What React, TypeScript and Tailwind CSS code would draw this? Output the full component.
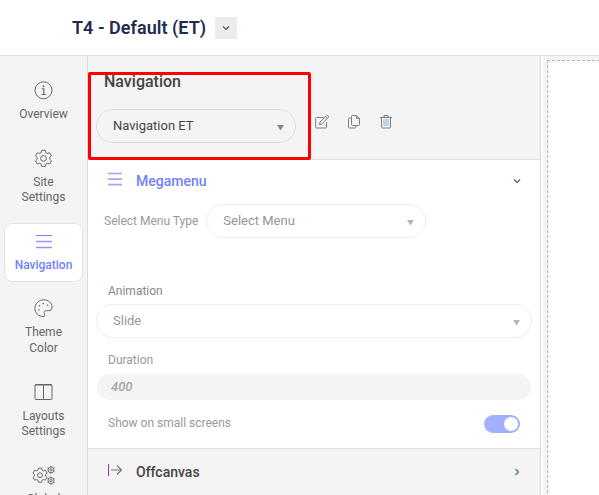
import type { ReactNode } from "react";

function Svg({ size = 20, width, children, className = "" }: { size?: number; width?: number; children: ReactNode; className?: string }) {
  const w = width ?? size;
  return (
    <svg width={w} height={size} viewBox={`0 0 ${w} ${size}`} fill="none" stroke="currentColor" strokeWidth="1" className={`shrink-0 ${className}`}>
      {children}
    </svg>
  );
}

const GEAR =
  "M8.2 1.5h3.6l.5 2.3 1.6.9 2.2-.8 1.9 3.1-1.7 1.6v1.9l1.7 1.6-1.9 3.1-2.2-.8-1.6.9-.5 2.3H8.2l-.5-2.3-1.6-.9-2.2.8L2 12.100l1.700-1.600V8.600L2 7l1.900-3.100 2.200.8 1.600-.9z";

const InfoIcon = () => (
  <Svg>
    <circle cx="9.500" cy="10.300" r="8.500" />
    <circle cx="9.500" cy="6.200" r="1" fill="currentColor" stroke="none" />
    <path d="M7.800 8.800h2v5.500M7.500 14.500h4.300" strokeWidth="1.100" />
  </Svg>
);

const GearIcon = () => (
  <Svg>
    <g transform="translate(-0.5 0.8)">
      <path d={GEAR} strokeLinejoin="round" />
      <circle cx="10" cy="9.600" r="2.900" />
    </g>
  </Svg>
);

const BarsIcon = () => (
  <Svg>
    <path d="M2 4.500h16" strokeWidth="1" />
    <path d="M2 10.500h16M2 16.500h16" stroke="#9a92fa" strokeWidth="1.400" />
  </Svg>
);

const PaletteIcon = () => (
  <Svg>
    <g transform="translate(-0.5 0.3)">
      <path d="M10 18.200C5 18.200 1.400 14.500 1.400 10S5.200 1.500 10.300 1.500c4.700 0 8.300 3.200 8.300 7.200 0 2.400-1.300 3.700-3.500 3.700h-2.200c-1.800 0-2.600 1.200-2.100 2.700.6 1.800.7 3.100-.8 3.100z" />
      <g fill="currentColor" stroke="none">
        <circle cx="5.500" cy="11.700" r=".8" />
        <circle cx="6" cy="7.400" r=".8" />
        <circle cx="9.600" cy="5.300" r=".8" />
        <circle cx="14" cy="7" r=".8" />
      </g>
    </g>
  </Svg>
);

const ColumnsIcon = () => (
  <Svg>
    <rect x="1" y="2.500" width="17" height="15" rx=".8" />
    <path d="M1 3h17M9.500 3v14" />
  </Svg>
);

const GearsIcon = () => (
  <Svg width={24}>
    <g transform="translate(-0.8 1.800) scale(.88)">
      <path d={GEAR} strokeLinejoin="round" strokeWidth="1.100" />
      <circle cx="10" cy="9.600" r="2.800" strokeWidth="1.100" />
    </g>
    <g>
      <circle cx="19" cy="4.800" r="3" />
      <circle cx="19" cy="4.800" r="1.100" />
      <circle cx="19" cy="15.600" r="3" />
      <circle cx="19" cy="15.600" r="1.100" />
      <path d="M19 .9v1M19 7.700v1M15.500 2.800l1 .6M21.500 6.300l1 .6M15.500 6.900l1-.6M21.500 3.400l1-.6M19 11.600v1M19 18.500v1M15.500 13.700l1 .6M21.500 17l1 .6M15.500 17.600l1-.6M21.500 14.300l1-.6" />
    </g>
  </Svg>
);

const items: { lines: string[]; icon: ReactNode; active?: boolean }[] = [
  { lines: ["Overview"], icon: <InfoIcon /> },
  { lines: ["Site", "Settings"], icon: <GearIcon /> },
  { lines: ["Navigation"], icon: <BarsIcon />, active: true },
  { lines: ["Theme", "Color"], icon: <PaletteIcon /> },
  { lines: ["Layouts", "Settings"], icon: <ColumnsIcon /> },
  { lines: ["Global", "Settings"], icon: <GearsIcon /> },
];

function Chevron({ right = false, color = "#455373" }: { right?: boolean; color?: string }) {
  return (
    <svg width="8" height="8" viewBox="0 0 8 8" fill="none" stroke={color} strokeWidth="1.100">
      <path d={right ? "M2.500 1 5.500 4l-3 3" : "M1 2.500 4 5.500l3-3"} />
    </svg>
  );
}

function Select({ value, className, muted = false }: { value: string; className: string; muted?: boolean }) {
  return (
    <div className={`flex h-[34px] items-center justify-between rounded-full border pr-[11px] pl-4 text-[13px] ${muted ? "border-[#eeeeee] text-[#969696]" : "border-[#dcdcdc] text-[#444]"} ${className}`}>
      <span>{value}</span>
      <svg width="7" height="6" viewBox="0 0 7 6" className={`mt-[3px] ${muted ? "text-[#b5b5b5]" : "text-[#888]"}`}>
        <path d="M0 0h7L3.500 5.500z" fill="currentColor" />
      </svg>
    </div>
  );
}

export default function App() {
  return (
    <div className="relative flex h-[495px] w-[599px] flex-col overflow-hidden bg-white font-[Roboto,sans-serif] text-[#444]">
      <header className="flex h-14 shrink-0 items-center gap-[9px] border-b border-[#e0e0e0] pl-[72px]">
        <h1 className="w-[134px] text-[18px] leading-[22px] font-semibold tracking-[0.03px] whitespace-nowrap text-[#212b4e]">T4 - Default (ET)</h1>
        <button className="flex h-[22px] w-[22px] items-center justify-center rounded-[2px] bg-[#ececec]">
          <Chevron />
        </button>
      </header>
      <div className="flex min-h-0 flex-1">
        <nav className="flex w-[88px] shrink-0 flex-col gap-2 overflow-hidden border-r border-[#dcdcdc] bg-[#f4f4f4] px-1 pt-4">
          {items.map((item) => (
            <div
              key={item.lines.join(" ")}
              className={`flex shrink-0 flex-col items-center rounded-lg border px-1 pt-[7px] pb-[8px] text-center text-[12px] leading-[15.6px] ${item.active ? "border-[#e4e4e4] bg-white font-medium text-[#7480ff]" : "border-transparent text-[#666]"}`}
            >
              {item.icon}
              <div className="mt-[7px]">
                {item.lines.map((line) => (
                  <div key={line}>{line}</div>
                ))}
              </div>
            </div>
          ))}
        </nav>
        <main className="flex w-[453px] shrink-0 flex-col border-r border-[#dadada]">
          <section className="h-[104px] shrink-0 border-b border-[#e0e0e0] bg-[#f4f4f4] px-2 pt-4">
            <h2 className="pl-2 text-[16px] leading-[20px] font-medium">Navigation</h2>
            <div className="mt-[17px] flex items-center">
              <Select value="Navigation ET" className="w-[200px]" />
              <div className="mb-2 ml-[18px] flex gap-4 text-[#808080]">
                <Svg size={16}>
                  <path d="M9.500 3.500h-7q-.8 0-.8.8v8.900q0 .8.800.8h9.300q.8 0 .8-.8V8M5.500 10.800l.5-2.700 6.600-6.500q.8-.7 1.600.1t.1 1.600L7.900 10zM11.800 2.500l1.700 1.700" />
                </Svg>
                <Svg size={16}>
                  <path d="M6.500 1.500h4l3 3v6q0 1-1 1h-6q-1 0-1-1v-8q0-1 1-1zM10.500 1.500v3h3M5.500 4h-2q-1 0-1 1v8q0 1 1 1H9q1 0 1-1v-1.500" />
                </Svg>
                <Svg size={16}>
                  <path d="M6 5v7M8 5v7M10 5v7" stroke="#83b6df" />
                  <path d="M2 3.500h12M6 3.500v-2h4v2M3.500 3.500v9.800q0 .7.700.7h7.600q.7 0 .7-.7V3.500" />
                </Svg>
              </div>
            </div>
          </section>
          <section className="h-[288px] shrink-0 px-2">
            <div className="flex h-[42px] items-center pr-[11px] pl-3">
              <svg width="14" height="14" viewBox="0 0 14 14" className="mb-1" stroke="#aaa1f8" strokeWidth="1.700">
                <path d="M0 1.500h14M0 7.100h14M0 12.600h14" />
              </svg>
              <h3 className="ml-[14px] flex-1 text-[14px] font-medium text-[#7480ff]">Megamenu</h3>
              <Chevron />
            </div>
            <div className="mt-[2px] flex items-center gap-2 pl-2">
              <span className="text-[12px] text-[#999]">Select Menu Type</span>
              <Select value="Select Menu" muted className="w-[220px]" />
            </div>
            <div className="mt-[45px] pl-3 text-[12px] leading-4 text-[#888]">Animation</div>
            <Select value="Slide" muted className="mt-[5px] w-[436px]" />
            <div className="mt-[14px] pl-3 text-[12px] leading-4 text-[#999]">Duration</div>
            <div className="mt-[6px] ml-px flex h-[26px] w-[434px] items-center rounded-full bg-[#f4f4f4] pl-[14px] text-[13px] font-medium text-[#a2a5aa] italic">400</div>
            <div className="mt-[14px] flex items-start justify-between pr-[12px] pl-3">
              <span className="text-[12px] leading-[18px] text-[#999]">Show on small screens</span>
              <div className="mt-px flex h-[18px] w-9 items-center justify-end rounded-full bg-[#a1b1ff] pr-[2px]">
                <div className="h-[14px] w-[14px] rounded-full bg-white" />
              </div>
            </div>
          </section>
          <section className="flex flex-1 items-center border-t border-[#e0e0e0] bg-[#f4f4f4] pr-[19px] pl-5">
            <svg width="15" height="14" viewBox="0 0 15 14" fill="none" className="mb-1" stroke="#737373" strokeWidth="1.100">
              <path d="M.5 1v12" stroke="#8a458a" />
              <path d="M3 7h10.500M9 2.500 13.500 7 9 11.500" />
            </svg>
            <h3 className="ml-[13px] flex-1 text-[14px] font-medium">Offcanvas</h3>
            <Chevron right color="#31708f" />
          </section>
        </main>
        <aside className="ml-[2px] flex-1 overflow-hidden bg-[#f4f4f4] pt-1 pl-1">
          <svg className="block" width="300" height="500">
            <rect x="2.500" y="2.500" width="300" height="500" fill="white" stroke="none" />
            <path d="M0 .5H300M.5 0V500" stroke="#bdbdbd" strokeDasharray="3 2" />
          </svg>
        </aside>
      </div>
      <div className="pointer-events-none absolute top-[72px] left-[88px] h-[88px] w-[223px] rounded-[2px] border-3 border-[#ff0000]" />
    </div>
  );
}
